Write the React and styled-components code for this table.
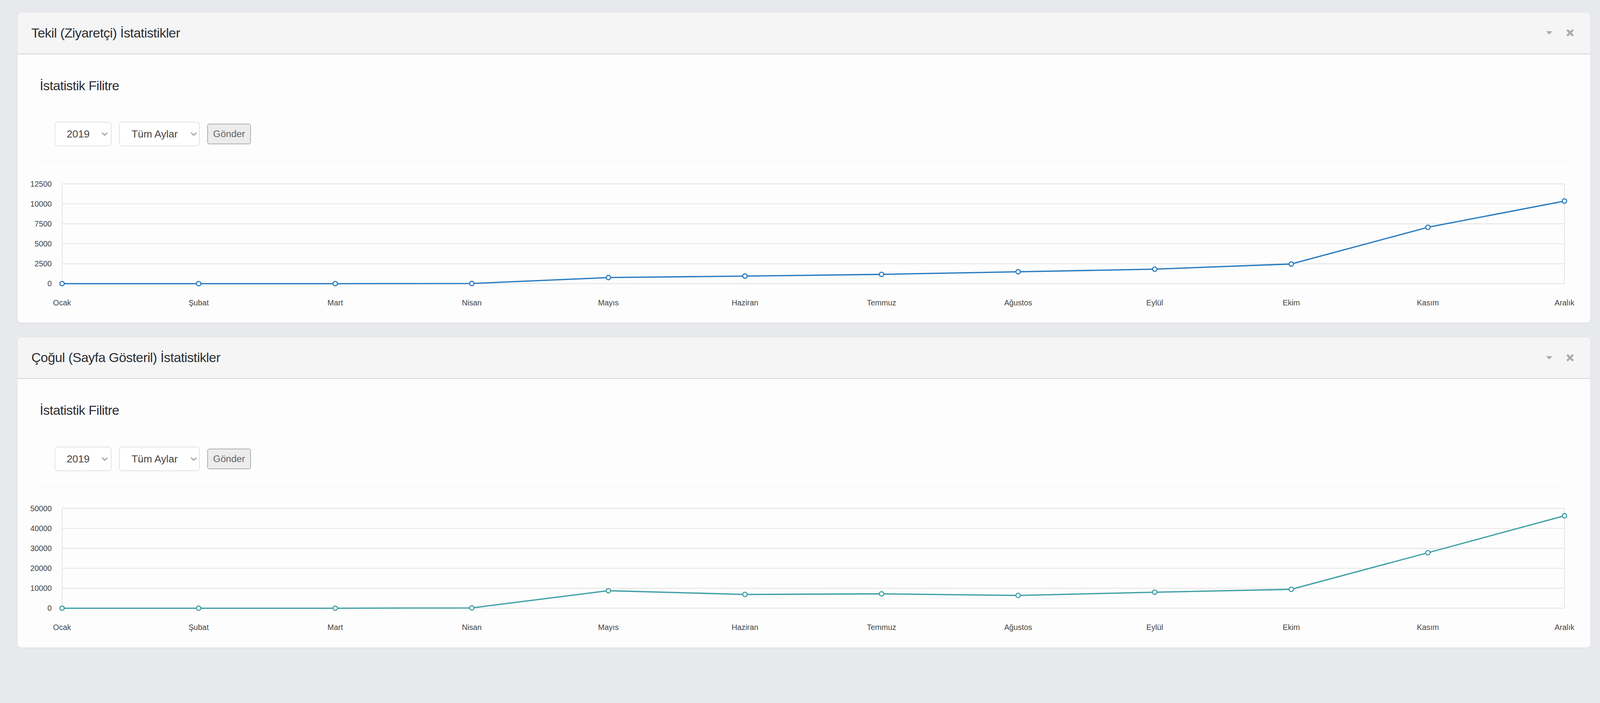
import React from "react";
import styled, { createGlobalStyle } from "styled-components";

/* The reference is measured in screen pixels; the page renders at a
   device scale of ~1.06, so lengths are written in screen px and
   converted to CSS px here (like a rem() helper). */
const DPR = 1.0605;
const d = (v) => `${(v / DPR).toFixed(2)}px`;

const GlobalStyle = createGlobalStyle`
  * { box-sizing: border-box; }
  html, body { margin: 0; padding: 0; }
  body {
    background: #e8e9ed;
    font-family: "Liberation Sans", Arial, sans-serif;
    color: #2c2e33;
  }
`;

const Page = styled.div`
  min-height: 100vh;
  padding: ${d(34)} ${d(26)} 0 ${d(48)};
  display: flex;
  flex-direction: column;
  gap: ${d(40)};
`;

const Panel = styled.section`
  background: #fdfdfd;
  border-radius: ${d(10)};
  box-shadow: 0 1px 3px rgba(0, 0, 0, 0.07);
  overflow: hidden;
`;

const PanelHeader = styled.header`
  height: ${d(113)};
  background: #f5f5f5;
  border-bottom: ${d(2.5)} solid #d6d6d6;
  display: flex;
  align-items: center;
  justify-content: space-between;
  padding: 0 ${d(45)} 0 ${d(37)};
`;

const PanelTitle = styled.h2`
  margin: 0;
  font-size: ${d(36)};
  font-weight: 400;
  letter-spacing: -0.55px;
  line-height: ${d(42)};
  color: #2c2e33;
`;

const HeaderTools = styled.div`
  display: flex;
  align-items: center;
  gap: ${d(38)};
  color: #ababab;
`;

const ToolIcon = styled.svg`
  display: block;
  width: ${(p) => d(p.$w)};
  height: ${(p) => d(p.$h)};
`;

const PanelBody = styled.div`
  padding: 0 ${d(30)} ${d(20)};
`;

const FilterHeading = styled.h3`
  margin: ${d(65)} 0 0 ${d(30)};
  font-size: ${d(36)};
  font-weight: 400;
  line-height: ${d(42)};
  letter-spacing: -0.65px;
  color: #2c2e33;
`;

const FilterBox = styled.form`
  margin: ${d(42)} ${d(33)} 0 ${d(30)};
  padding: ${d(35)} ${d(40)} ${d(41)};
  background: #fdfdfd;
  border-radius: ${d(10)};
  box-shadow: 0 1px 3px rgba(0, 0, 0, 0.05);
  display: flex;
  align-items: center;
  gap: ${d(21)};
`;

const SelectWrap = styled.div`
  position: relative;
  width: ${(p) => d(p.$width)};
  height: ${d(66)};
`;

const Select = styled.select`
  appearance: none;
  -webkit-appearance: none;
  width: 100%;
  height: 100%;
  margin: 0;
  border: ${d(2)} solid #c9c9c9;
  border-radius: ${d(8)};
  background: #ffffff;
  padding: 0 0 0 ${(p) => d(p.$padLeft)};
  font-family: "Liberation Sans", Arial, sans-serif;
  font-size: ${d(28)};
  color: #444;
  outline: none;
`;

const Chevron = styled.svg`
  position: absolute;
  top: 50%;
  right: ${(p) => d(p.$right)};
  width: ${d(17)};
  height: ${d(10)};
  transform: translateY(-50%);
  pointer-events: none;
`;

const SubmitButton = styled.button`
  width: ${d(118)};
  height: ${d(55)};
  margin: 0;
  border: ${d(2)} solid #707070;
  border-radius: ${d(5)};
  background: #ececec;
  color: #626262;
  font-family: "Liberation Sans", Arial, sans-serif;
  font-size: ${d(26)};
  padding: 0;
`;

const ChartSvg = styled.svg`
  display: block;
  width: 100%;
  height: auto;
  margin-top: ${d(22)};
`;

const months = [
  "Ocak",
  "Şubat",
  "Mart",
  "Nisan",
  "Mayıs",
  "Haziran",
  "Temmuz",
  "Ağustos",
  "Eylül",
  "Ekim",
  "Kasım",
  "Aralık",
];

const W = 4210;
const H = 396;
const PL = 90;
const PR = 4169;
const PT = 39;
const PB = 310;

function LineChart({ data, max, step, color }) {
  const ticks = [];
  for (let v = 0; v <= max; v += step) ticks.push(v);
  const xAt = (i) => PL + ((PR - PL) * i) / (data.length - 1);
  const yAt = (v) => PB - ((PB - PT) * v) / max;
  const pts = data.map((v, i) => `${xAt(i)},${yAt(v)}`).join(" ");
  return (
    <ChartSvg viewBox={`0 0 ${W} ${H}`}>
      {ticks.map((t) => (
        <g key={t}>
          <line x1={PL} x2={PR} y1={yAt(t)} y2={yAt(t)} stroke="#e2e2e2" strokeWidth="2" />
          <text
            x={62}
            y={yAt(t)}
            textAnchor="end"
            dominantBaseline="central"
            fontFamily="Liberation Sans, Arial, sans-serif"
            fontSize="21"
            fill="#444"
          >
            {t}
          </text>
        </g>
      ))}
      <line x1={PL} x2={PL} y1={PT} y2={PB} stroke="#e2e2e2" strokeWidth="2" />
      <line x1={PR} x2={PR} y1={PT} y2={PB} stroke="#e2e2e2" strokeWidth="2" />
      {months.map((m, i) => (
        <text
          key={m}
          x={xAt(i)}
          y={362}
          textAnchor="middle"
          dominantBaseline="central"
          fontFamily="Liberation Sans, Arial, sans-serif"
          fontSize="21"
          fill="#444"
        >
          {m}
        </text>
      ))}
      <polyline points={pts} fill="none" stroke={color} strokeWidth="3.5" strokeLinejoin="round" />
      {data.map((v, i) => (
        <circle key={i} cx={xAt(i)} cy={yAt(v)} r="6" fill="#fff" stroke={color} strokeWidth="3" />
      ))}
    </ChartSvg>
  );
}

function ChevronIcon({ right }) {
  return (
    <Chevron $right={right} viewBox="0 0 17 10">
      <path d="M1 1.5 L8.5 8.5 L16 1.5" fill="none" stroke="#555" strokeWidth="1.5" />
    </Chevron>
  );
}

function StatPanel({ title, data, max, step, color }) {
  return (
    <Panel>
      <PanelHeader>
        <PanelTitle>{title}</PanelTitle>
        <HeaderTools>
          <ToolIcon $w={17} $h={9} viewBox="0 0 17 9">
            <polygon points="0,0 17,0 8.5,9" fill="currentColor" />
          </ToolIcon>
          <ToolIcon $w={20} $h={19} viewBox="0 0 20 19">
            <path
              d="M3.5 3 L16.5 16 M16.5 3 L3.5 16"
              stroke="currentColor"
              strokeWidth="5.5"
              strokeLinecap="round"
            />
          </ToolIcon>
        </HeaderTools>
      </PanelHeader>
      <PanelBody>
        <FilterHeading>İstatistik Filitre</FilterHeading>
        <FilterBox onSubmit={(e) => e.preventDefault()}>
          <SelectWrap $width={154}>
            <Select $padLeft={32} defaultValue="2019">
              <option value="2019">2019</option>
              <option value="2018">2018</option>
            </Select>
            <ChevronIcon right={9} />
          </SelectWrap>
          <SelectWrap $width={219}>
            <Select $padLeft={33} defaultValue="all">
              <option value="all">Tüm Aylar</option>
              {months.map((m) => (
                <option key={m} value={m}>
                  {m}
                </option>
              ))}
            </Select>
            <ChevronIcon right={7} />
          </SelectWrap>
          <SubmitButton type="submit">Gönder</SubmitButton>
        </FilterBox>
        <LineChart data={data} max={max} step={step} color={color} />
      </PanelBody>
    </Panel>
  );
}

export default function App() {
  return (
    <>
      <GlobalStyle />
      <Page>
        <StatPanel
          title="Tekil (Ziyaretçi) İstatistikler"
          data={[0, 0, 0, 20, 764, 950, 1165, 1490, 1815, 2463, 7060, 10347]}
          max={12500}
          step={2500}
          color="#2a7cc0"
        />
        <StatPanel
          title="Çoğul (Sayfa Gösteril) İstatistikler"
          data={[0, 0, 0, 150, 8770, 6900, 7200, 6400, 8020, 9460, 27800, 46300]}
          max={50000}
          step={10000}
          color="#40a0a6"
        />
      </Page>
    </>
  );
}
